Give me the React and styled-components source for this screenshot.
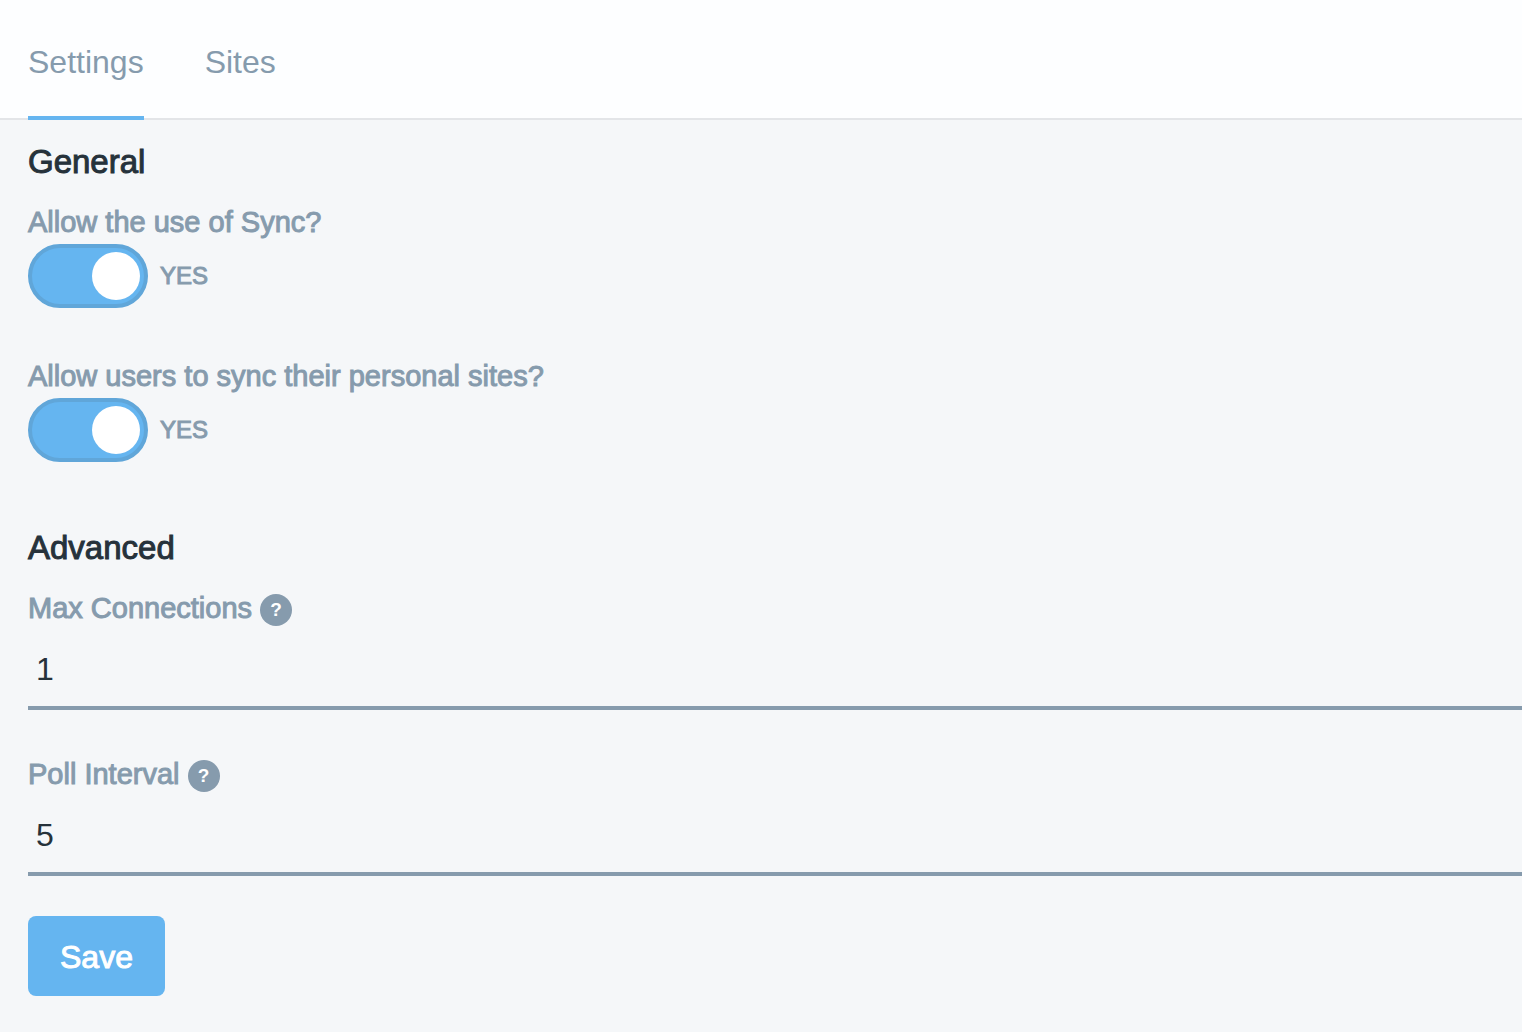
import React, { useState } from "react";
import styled, { createGlobalStyle } from "styled-components";

const color = {
  page: "#f5f7f9",
  header: "#fdfeff",
  rule: "#e3e5e8",
  muted: "#869bad",
  ink: "#26323b",
  accent: "#65b5f0",
  accentEdge: "#60a6d9",
};

const GlobalStyle = createGlobalStyle`
  *, *::before { box-sizing: border-box; }
  body {
    margin: 0;
    background: ${color.page};
    color: ${color.ink};
    font-family: "Liberation Sans", Arial, sans-serif;
  }
`;

const Header = styled.header`
  padding: 0 28px;
  background: ${color.header};
  border-bottom: 2px solid ${color.rule};
`;

const Tabs = styled.nav`
  display: flex;
  gap: 61px;
  margin-bottom: -2px;
`;

const Tab = styled.a`
  padding: 42px 0 34px;
  border-bottom: 4px solid ${(p) => (p.$active ? color.accent : "transparent")};
  color: ${color.muted};
  font-size: 32px;
  line-height: 40px;
  text-decoration: none;
`;

const Form = styled.form`
  display: flex;
  flex-direction: column;
  align-items: stretch;
  padding: 22px 0 36px 28px;
`;

const Section = styled.section`
  display: flex;
  flex-direction: column;
  gap: ${(p) => p.$gap};
  & + & {
    margin-top: 66px;
  }
`;

const Title = styled.h2`
  margin: 0;
  font-size: 33px;
  line-height: 40px;
  font-weight: 400;
  -webkit-text-stroke: 1px currentColor;
`;

const SectionBlock = styled.div`
  display: flex;
  flex-direction: column;
  gap: 22px;
`;

const Field = styled.div`
  display: flex;
  flex-direction: column;
  gap: 4px;
`;

const LabelRow = styled.div`
  display: flex;
  align-items: flex-end;
  gap: 8px;
`;

const Label = styled.label`
  color: ${color.muted};
  font-size: 29px;
  line-height: 36px;
  -webkit-text-stroke: 1px currentColor;
`;

const SwitchRow = styled.div`
  display: flex;
  align-items: center;
  gap: 12px;
`;

const Switch = styled.input`
  appearance: none;
  display: flex;
  justify-content: flex-start;
  align-items: center;
  width: 120px;
  height: 64px;
  margin: 0;
  padding: 4px;
  border: 4px solid ${color.muted};
  border-radius: 32px;
  background: ${color.muted};
  cursor: pointer;

  &::before {
    content: "";
    width: 48px;
    height: 48px;
    border-radius: 50%;
    background: #fff;
  }

  &:checked {
    justify-content: flex-end;
    border-color: ${color.accentEdge};
    background: ${color.accent};
  }
`;

const SwitchState = styled.span`
  color: ${color.muted};
  font-size: 24px;
  line-height: 36px;
  -webkit-text-stroke: 1px currentColor;
`;

const Help = styled.button`
  width: 32px;
  height: 32px;
  padding: 0;
  border: 0;
  border-radius: 50%;
  background: ${color.muted};
  color: #fff;
  font: bold 19px/32px "Liberation Sans", Arial, sans-serif;
  cursor: help;
`;

const TextInput = styled.input`
  width: 100%;
  height: 80px;
  padding: 2px 8px 0;
  border: 0;
  border-bottom: 4px solid ${color.muted};
  border-radius: 0;
  outline: 0;
  background: transparent;
  color: ${color.ink};
  font: 32px/40px "Liberation Sans", Arial, sans-serif;
`;

const SaveButton = styled.button`
  align-self: flex-start;
  margin-top: 40px;
  padding: 21px 32px 19px;
  border: 0;
  border-radius: 8px;
  background: ${color.accent};
  color: #fff;
  font: 32px/40px "Liberation Sans", Arial, sans-serif;
  -webkit-text-stroke: 1px currentColor;
  cursor: pointer;
`;

function SwitchField({ id, label }) {
  const [on, setOn] = useState(true);
  return (
    <Field>
      <Label htmlFor={id}>{label}</Label>
      <SwitchRow>
        <Switch
          id={id}
          type="checkbox"
          checked={on}
          onChange={(e) => setOn(e.target.checked)}
        />
        <SwitchState>{on ? "YES" : "NO"}</SwitchState>
      </SwitchRow>
    </Field>
  );
}

function NumberField({ id, label, initial }) {
  const [value, setValue] = useState(initial);
  return (
    <Field>
      <LabelRow>
        <Label htmlFor={id}>{label}</Label>
        <Help type="button">?</Help>
      </LabelRow>
      <TextInput
        id={id}
        inputMode="numeric"
        value={value}
        onChange={(e) => setValue(e.target.value)}
      />
    </Field>
  );
}

export default function App() {
  return (
    <>
      <GlobalStyle />
      <Header>
        <Tabs>
          <Tab href="#settings" $active>Settings</Tab>
          <Tab href="#sites">Sites</Tab>
        </Tabs>
      </Header>
      <Form onSubmit={(e) => e.preventDefault()}>
        <Section $gap="50px">
          <SectionBlock>
            <Title>General</Title>
            <SwitchField id="allow-sync" label="Allow the use of Sync?" />
          </SectionBlock>
          <SwitchField
            id="allow-personal"
            label="Allow users to sync their personal sites?"
          />
        </Section>
        <Section $gap="46px">
          <SectionBlock>
            <Title>Advanced</Title>
            <NumberField id="max-connections" label="Max Connections" initial="1" />
          </SectionBlock>
          <NumberField id="poll-interval" label="Poll Interval" initial="5" />
        </Section>
        <SaveButton type="submit">Save</SaveButton>
      </Form>
    </>
  );
}
